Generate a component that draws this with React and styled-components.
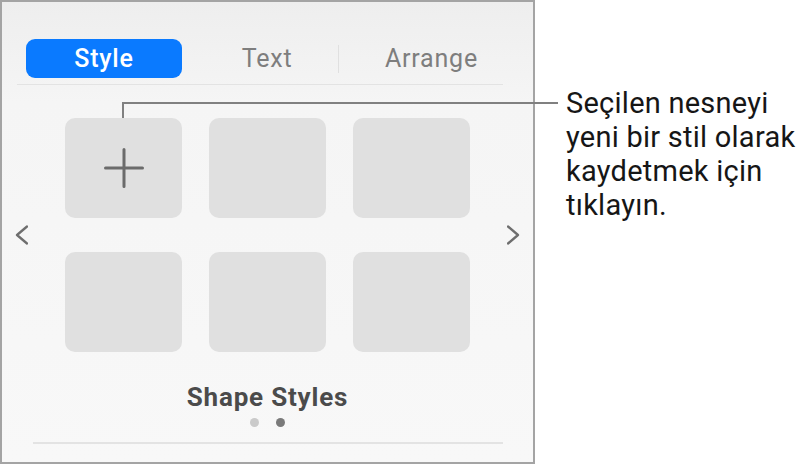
import React from "react";
import styled, { createGlobalStyle } from "styled-components";

const Global = createGlobalStyle`
  html, body { margin: 0; padding: 0; background: #ffffff; }
  body { font-family: Roboto, "Noto Sans", sans-serif; -webkit-font-smoothing: antialiased; }
`;

const Page = styled.div`
  position: relative;
  width: 806px;
  height: 465px;
  display: flex;
  align-items: flex-start;
`;

const Panel = styled.section`
  box-sizing: border-box;
  width: 535px;
  height: 464px;
  flex: 0 0 auto;
  border: 2px solid #a4a4a4;
  background: linear-gradient(180deg, #eeeeee 0%, #f5f5f5 22%, #f8f8f8 100%);
  display: flex;
  flex-direction: column;
`;

const TabBar = styled.nav`
  margin: 37px 30px 0 15px;
  padding: 0 0 6px 9px;
  border-bottom: 1px solid #e3e3e3;
  display: flex;
  align-items: center;
`;

const Tab = styled.div`
  box-sizing: border-box;
  height: 39px;
  display: flex;
  align-items: center;
  justify-content: center;
  font-size: 25px;
  letter-spacing: 0.8px;
  border-radius: 9px;
  width: ${(p) => p.$w}px;
  margin-left: ${(p) => p.$ml || 0}px;
  padding-left: ${(p) => p.$pl || 0}px;
  color: ${(p) => (p.$active ? "#ffffff" : "#7e7e7e")};
  background: ${(p) => (p.$active ? "#0a7aff" : "transparent")};
  font-weight: ${(p) => (p.$active ? 500 : 400)};
`;

const TabDivider = styled.span`
  width: 1px;
  height: 28px;
  background: #e0e0e0;
`;

const Carousel = styled.div`
  margin-top: 33px;
  display: flex;
  justify-content: center;
  align-items: center;
  gap: 37px;
`;

const Grid = styled.div`
  display: grid;
  grid-template-columns: repeat(3, 117px);
  grid-auto-rows: 100px;
  column-gap: 27px;
  row-gap: 34px;
`;

const Tile = styled.div`
  background: #e0e0e0;
  border-radius: 10px;
  display: flex;
  align-items: center;
  justify-content: center;
`;

const Chevron = styled.svg`
  width: 13px;
  height: 20px;
  flex: 0 0 auto;
`;

const Title = styled.h2`
  margin: 30px 0 0;
  font-size: 26px;
  line-height: 30px;
  letter-spacing: 0.8px;
  font-weight: 700;
  color: #4b4b4b;
  text-align: center;
`;

const Dots = styled.div`
  margin-top: 6px;
  display: flex;
  justify-content: center;
  gap: 17px;
`;

const Dot = styled.span`
  width: 9px;
  height: 9px;
  border-radius: 50%;
  background: ${(p) => (p.$on ? "#7a7a7a" : "#cacaca")};
`;

const Rule = styled.div`
  margin: 15px 30px 0 31px;
  height: 2px;
  background: #e3e3e3;
`;

const Callout = styled.p`
  margin: 86px 0 0 31px;
  font-size: 29px;
  line-height: 34px;
  letter-spacing: 0.25px;
  color: #161616;
`;

const CalloutLine = styled.span`
  display: block;
  white-space: nowrap;
`;

const Leader = styled.div`
  position: absolute;
  left: 122px;
  top: 102px;
  width: 436px;
  height: 16px;
  box-sizing: border-box;
  border-top: 2px solid #808080;
  border-left: 2px solid #808080;
`;

const PlusIcon = () => (
  <svg width="40" height="40" viewBox="0 0 40 40">
    <path d="M20 1.5V38.5M1.5 20H38.5" stroke="#6b6b6b" strokeWidth="3" strokeLinecap="round" fill="none" />
  </svg>
);

export default function App() {
  return (
    <Page>
      <Global />
      <Panel>
        <TabBar>
          <Tab $active $w={156}>Style</Tab>
          <Tab $w={142} $ml={14}>Text</Tab>
          <TabDivider />
          <Tab $w={164} $pl={21}>Arrange</Tab>
        </TabBar>
        <Carousel>
          <Chevron viewBox="0 0 13 20">
            <path d="M12 1.5L2 10L12 18.5" stroke="#6e6e6e" strokeWidth="2.3" strokeLinecap="round" strokeLinejoin="round" fill="none" />
          </Chevron>
          <Grid>
            <Tile><PlusIcon /></Tile>
            <Tile />
            <Tile />
            <Tile />
            <Tile />
            <Tile />
          </Grid>
          <Chevron viewBox="0 0 13 20">
            <path d="M1 1.5L11 10L1 18.5" stroke="#6e6e6e" strokeWidth="2.3" strokeLinecap="round" strokeLinejoin="round" fill="none" />
          </Chevron>
        </Carousel>
        <Title>Shape Styles</Title>
        <Dots>
          <Dot />
          <Dot $on />
        </Dots>
        <Rule />
      </Panel>
      <Callout>
        <CalloutLine>Seçilen nesneyi</CalloutLine>
        <CalloutLine>yeni bir stil olarak</CalloutLine>
        <CalloutLine>kaydetmek için</CalloutLine>
        <CalloutLine>tıklayın.</CalloutLine>
      </Callout>
      <Leader />
    </Page>
  );
}
